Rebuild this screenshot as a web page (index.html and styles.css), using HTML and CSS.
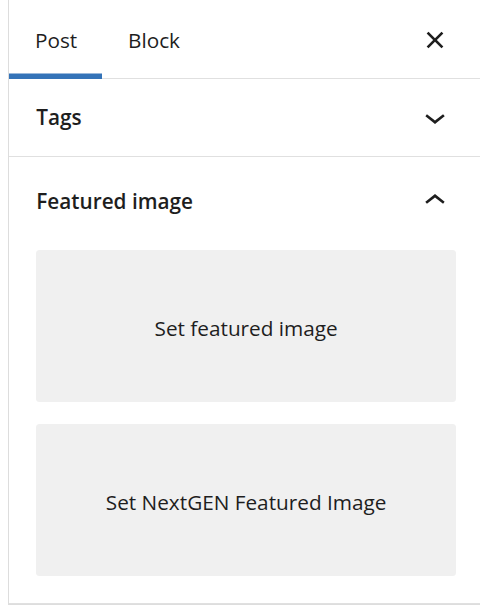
FILE: index.html
```html
<!DOCTYPE html>
<html lang="en">
<head>
<meta charset="utf-8">
<title>Post settings</title>
<link rel="stylesheet" href="styles.css">
</head>
<body>
<div class="sidebar">
  <div class="tabs">
    <button class="tab active">Post</button>
    <button class="tab">Block</button>
    <button class="close" aria-label="Close">
      <svg viewBox="0 0 24 24" width="42" height="42"><path d="M12 13.06l3.712 3.713 1.061-1.06L13.061 12l3.712-3.712-1.06-1.06L12 10.938 8.288 7.227l-1.061 1.06L10.939 12l-3.712 3.712 1.06 1.061L12 13.061z"/></svg>
    </button>
  </div>
  <div class="panel">
    <div class="panel-head closed">
      <span>Tags</span>
      <svg viewBox="0 0 24 24" width="42" height="42"><path d="M17.5 11.6L12 16l-5.5-4.4.9-1.2L12 14l4.6-3.6 1 1.2z"/></svg>
    </div>
  </div>
  <div class="panel">
    <div class="panel-head open">
      <span>Featured image</span>
      <svg viewBox="0 0 24 24" width="42" height="42"><path d="M6.5 12.4L12 8l5.5 4.4-.9 1.2L12 10l-4.6 3.6-1-1.2z"/></svg>
    </div>
    <div class="panel-body">
      <button class="fi-btn">Set featured image</button>
      <button class="fi-btn">Set NextGEN Featured Image</button>
    </div>
  </div>
</div>
</body>
</html>
```
FILE: styles.css
```css
html, body {
  margin: 0;
  padding: 0;
  background: #fff;
  overflow: hidden;
}
body {
  font-family: "Open Sans", "Noto Sans", sans-serif;
  color: #1e1e1e;
  font-size: 20.75px;
}
button {
  font: inherit;
  color: inherit;
  background: none;
  border: 0;
  margin: 0;
  padding: 0;
  cursor: pointer;
}
.sidebar {
  margin-left: 8px;
  border-left: 1.75px solid #dddddd;
  border-bottom: 1.75px solid #dddddd;
}
.tabs {
  display: flex;
  align-items: flex-start;
  height: 78px;
  padding-right: 24px;
  border-bottom: 1.75px solid #e0e0e0;
}
.tab {
  width: 93px;
  height: 79px;
  padding-left: 26px;
  padding-top: 1px;
  text-align: left;
  line-height: 1.2;
}
.tab.active {
  box-shadow: inset 0 -5.5px 0 #3473b8;
}
.close {
  margin-left: auto;
  margin-top: 18.5px;
  width: 42px;
  height: 42px;
  display: flex;
}
svg {
  fill: #1e1e1e;
  display: block;
}
.panel {
  border-bottom: 1.75px solid #e0e0e0;
}
.panel-head {
  box-sizing: border-box;
  display: flex;
  align-items: center;
  justify-content: space-between;
  padding-left: 27.25px;
  padding-right: 24px;
  font-weight: 600;
}
.panel-head.closed {
  height: 77.25px;
  padding-bottom: 1.5px;
}
.panel-head.open {
  height: 84px;
  padding-top: 4px;
}
.panel-body {
  display: flex;
  flex-direction: column;
  gap: 22px;
  padding: 9px 24px 26.5px 27.25px;
}
.fi-btn {
  box-sizing: border-box;
  height: 152px;
  padding-top: 3px;
  background: #f0f0f0;
  border-radius: 3.5px;
  display: flex;
  align-items: center;
  justify-content: center;
}
```
